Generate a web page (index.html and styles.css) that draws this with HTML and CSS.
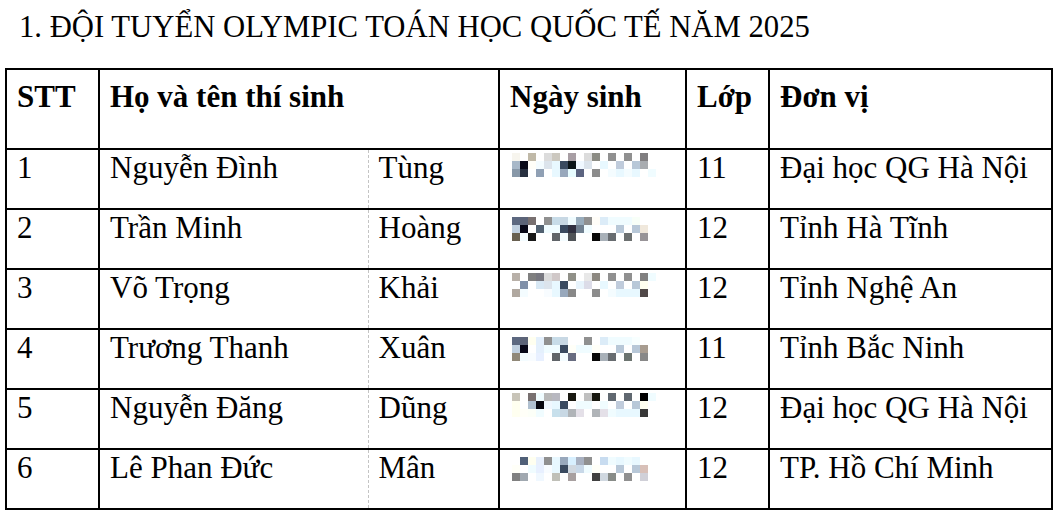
FILE: index.html
```html
<!DOCTYPE html>
<html lang="vi">
<head>
<meta charset="utf-8">
<title>Đội tuyển Olympic Toán học Quốc tế năm 2025</title>
<link rel="stylesheet" href="styles.css">
</head>
<body>
<div class="page">
  <h1 class="title">1. ĐỘI TUYỂN OLYMPIC TOÁN HỌC QUỐC TẾ NĂM 2025</h1>
  <table class="team">
    <colgroup>
      <col class="c-stt"><col class="c-ho"><col class="c-ten"><col class="c-date"><col class="c-lop"><col class="c-dv">
    </colgroup>
    <thead>
      <tr><th>STT</th><th colspan="2">Họ và tên thí sinh</th><th>Ngày sinh</th><th>Lớp</th><th>Đơn vị</th></tr>
    </thead>
    <tbody>
      <tr><td>1</td><td class="fam">Nguyễn Đình</td><td class="given">Tùng</td><td class="date"><svg class="mosaic" data-off="4" width="146" height="40" viewBox="0 0 146 40"></svg></td><td>11</td><td>Đại học QG Hà Nội</td></tr>
      <tr><td>2</td><td class="fam">Trần Minh</td><td class="given">Hoàng</td><td class="date"><svg class="mosaic" data-off="8" width="146" height="40" viewBox="0 0 146 40"></svg></td><td>12</td><td>Tỉnh Hà Tĩnh</td></tr>
      <tr><td>3</td><td class="fam">Võ Trọng</td><td class="given">Khải</td><td class="date"><svg class="mosaic" data-off="4" width="146" height="40" viewBox="0 0 146 40"></svg></td><td>12</td><td>Tỉnh Nghệ An</td></tr>
      <tr><td>4</td><td class="fam">Trương Thanh</td><td class="given">Xuân</td><td class="date"><svg class="mosaic" data-off="8" width="146" height="40" viewBox="0 0 146 40"></svg></td><td>11</td><td>Tỉnh Bắc Ninh</td></tr>
      <tr><td>5</td><td class="fam">Nguyễn Đăng</td><td class="given">Dũng</td><td class="date"><svg class="mosaic" data-off="4" width="146" height="40" viewBox="0 0 146 40"></svg></td><td>12</td><td>Đại học QG Hà Nội</td></tr>
      <tr><td>6</td><td class="fam">Lê Phan Đức</td><td class="given">Mân</td><td class="date"><svg class="mosaic" data-off="8" width="146" height="40" viewBox="0 0 146 40"></svg></td><td>12</td><td>TP. Hồ Chí Minh</td></tr>
    </tbody>
  </table>
</div>
<script src="script.js"></script>
</body>
</html>
```

FILE: styles.css
```css
html, body {
  margin: 0;
  background: #ffffff;
  color: #000000;
  font-family: "Liberation Serif", "Times New Roman", serif;
}

.page {
  padding: 10px 0 0 5px;
}

.title {
  margin: 0 0 24px 14px;
  font-size: 30.7px;
  font-weight: normal;
  line-height: 34px;
}

.team {
  border-collapse: collapse;
  table-layout: fixed;
  width: 1046px;
  font-size: 31px;
  line-height: 34px;
}

.c-stt { width: 93px; }
.c-ho { width: 269px; }
.c-ten { width: 131px; }
.c-date { width: 187px; }
.c-lop { width: 83px; }
.c-dv { width: 283px; }

.team th,
.team td {
  border: 2px solid #000000;
  text-align: left;
  vertical-align: top;
  padding: 1px 10px 0;
  white-space: nowrap;
  overflow: hidden;
}

.team th {
  font-weight: bold;
  height: 68px;
  padding-top: 10px;
}

.team td {
  height: 57px;
}

.team td.fam {
  border-right: 1px dashed #c4c4c4;
}

.team td.given {
  border-left: 1px dashed #c4c4c4;
}

.team td.date {
  padding: 0 0 0 12px;
}

.mosaic {
  display: block;
}
```

FILE: script.js
```js
var DATA = [
  [
    "f7f5ee - c0b9a8 - dcdcdc ccc8bf - a89ea4 - dcdcdc 8c8c84 - 909090 - 909090 - 807e80 -",
    "a8b8c8 0a0a18 fffef8 f4fcff dce4ec e8f8ff 3a4a60 0c1418 f0f8ff dce4ec - e8f8ff - c0ccdc - b8c8d8 a8acb0 -",
    "8898a8 283040 - 90a0b4 - e8f8ff 98a8bc e8fcff 5c6480 - 8c8c8c - f4fcff e8f8ff f4fcff e8f8ff - f0fcff"
  ],
  [
    "5c6880 5c6478 787070 - 909090 c8dce8 c8d8e4 f0fcff 98acbc 909090 fffdf8 dcecf8 f0fcff f0fcff f0fcff f8fff8 - -",
    "c0d0e0 080818 - 506070 f0fcff f0fcff 3a4a60 303040 708090 f0fcff - - - b8c8d8 - b8c8d8 f0e8dc -",
    "686050 f4fcff 181818 - - 606468 f4fcff 505458 - - 080808 a8b0b8 686c70 - 6c7070 - 989498 -"
  ],
  [
    "b8b0a8 - 808080 787880 dcdcdc d0c8c8 - 909088 - e8e8e8 8c8880 - 909090 - 909090 - 808080 f0fcff",
    "- 8090a8 - d8e8f4 dce4ec e8f8ff 3a4a60 - e8f4fc dcdce8 - e8f8ff - c0ccdc - b8c8d8 fffff0 -",
    "b0a8a0 f4fcff - - f8fcff e8f8ff 98a8bc 888888 - - 8c8c8c - f4fcff e8f8ff e8f8ff e8f8ff 504848 -"
  ],
  [
    "5c6880 5c6478 fffff0 e4f0fc 909090 c8dce8 c8d8e4 - - 909090 - dcecf8 f0fcff f0fcff f0fcff f8ffff - -",
    "c0d0e0 080818 - e4f0fc f0fcff f0fcff 3a4a60 fffff8 f0fcff f0fcff fffff8 - - b8c8d8 - b8c8d8 a89c90 -",
    "908878 f4fcff f8fcff e8f0ff - 606468 f4fcff 686c80 - - 080808 a8b0b8 686c70 - 6c7470 - 888888 -"
  ],
  [
    "c8c4b8 - 787070 f0fcff b8b8b8 b8b8c0 - 181810 - c0c0c0 181810 - 606870 - 606870 - 000000 f0fcff",
    "fffff0 - b0c0d0 080810 f0f8ff e8f8ff 3a4a60 - f0fcff f0fcff - f0fcff - c0ccdc - b8c8d8 fffff0 -",
    "fffff0 fffff8 fcfff8 f0fcff - c8e0ec c8d8e4 b0b4b8 e4e0e8 - b0b4b8 e4e0e8 f0fcff e8f8ff e8f8ff e8f8ff 383838 -"
  ],
  [
    "- 506078 fffff0 e8f0fc 909090 e8f8ff 98a8bc d8f0ff a8b0c0 909090 - c8dcf0 f0fcff e8f8ff f0fcff e8f8ff - -",
    "fffff8 - f0fcff e8f0ff f8fcff e8f8ff 3a4a60 d0d8e0 c8d8e8 f0fcff fffff8 - - b8c8d8 - b8c8d8 d8c0b8 -",
    "808080 a0a8b0 - f0f8ff - c0c0b8 - a8a0a0 - - 404040 d0d8e0 888c88 - 909090 - d0d0d8 -"
  ]
];

var NS = "http://www.w3.org/2000/svg";
var CELL = 8;

document.querySelectorAll(".mosaic").forEach(function (svg, i) {
  var off = parseInt(svg.getAttribute("data-off"), 10) - 1;
  var rows = DATA[i] || [];
  rows.forEach(function (row, r) {
    row.split(" ").forEach(function (c, col) {
      if (c === "-") return;
      var rect = document.createElementNS(NS, "rect");
      rect.setAttribute("x", col * CELL);
      rect.setAttribute("y", off + r * CELL);
      rect.setAttribute("width", CELL);
      rect.setAttribute("height", CELL);
      rect.setAttribute("fill", "#" + c);
      svg.appendChild(rect);
    });
  });
});
```
